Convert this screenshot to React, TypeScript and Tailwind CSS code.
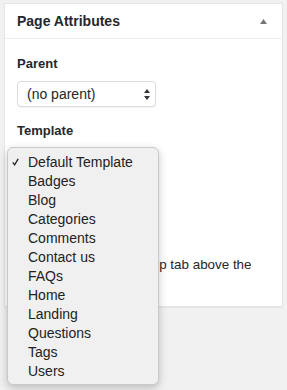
import React from "react";

const TEMPLATES = [
  "Default Template",
  "Badges",
  "Blog",
  "Categories",
  "Comments",
  "Contact us",
  "FAQs",
  "Home",
  "Landing",
  "Questions",
  "Tags",
  "Users",
];

function SelectArrows() {
  return (
    <svg width="6" height="11" viewBox="0 0 6 11" className="fill-[#32373c]">
      <path d="M3 0 L6 4 L0 4 Z" />
      <path d="M0 7 L6 7 L3 11 Z" />
    </svg>
  );
}

export default function App() {
  return (
    <div
      className="relative w-[287px] h-[390px] overflow-hidden bg-[#f1f1f1] pt-[3px] px-1 text-[#23282d]"
      style={{ fontFamily: '"Liberation Sans", Arial, sans-serif' }}
    >
      {/* Panel */}
      <div className="w-[279px] border border-[#e5e5e5] bg-white shadow-[0_1px_1px_rgba(0,0,0,0.04)]">
        <div className="flex h-[35px] items-center justify-between border-b border-[#eeeeee] px-3">
          <h2 className="text-[14px] font-bold leading-none">Page Attributes</h2>
          <svg width="7" height="5" viewBox="0 0 7 5" className="mr-[3px] fill-[#72777c]">
            <path d="M3.5 0 L7 5 L0 5 Z" />
          </svg>
        </div>

        <div className="px-3 pt-4 pb-[13px]">
          <p className="text-[13px] font-semibold leading-[18px]">Parent</p>
          <div className="mt-2 flex h-[26px] w-[139px] items-center justify-between rounded-[4px] border border-[#dcdcdc] bg-white pl-[9px] pr-[5px] shadow-[0_1px_1px_rgba(0,0,0,0.05)]">
            <span className="text-[14px] leading-none">(no parent)</span>
            <SelectArrows />
          </div>

          <p className="mt-[15px] text-[13px] font-semibold leading-[18px]">Template</p>
          <div className="mt-2 flex h-[26px] w-[139px] items-center justify-between rounded-[4px] border border-[#dcdcdc] bg-white pl-[9px] pr-[5px]">
            <span className="text-[14px] leading-none">Default Template</span>
            <SelectArrows />
          </div>

          <p className="mt-[15px] text-[13px] font-semibold leading-[18px]">Order</p>
          <div className="mt-2 h-[26px] w-[60px] rounded-[3px] border border-[#dddddd]" />

          <p className="mt-[14px] text-[13.4px] leading-[19px]">
            Need help? Use the Help tab above the screen title.
          </p>
        </div>
      </div>

      {/* Open template menu */}
      <div className="absolute left-[7px] top-[147px] w-[152px] rounded-[6px] border border-[#c9c9c9] bg-[#f0f0f0] py-1 shadow-[0_3px_8px_rgba(0,0,0,0.22)]">
        {TEMPLATES.map((name, i) => (
          <div key={name} className="relative flex h-[19px] items-center pl-[20px] text-[14px] leading-none text-[#222222]">
            {i === 0 && (
              <svg width="7" height="8" viewBox="0 0 7 8" className="absolute left-[4px] top-[6px] stroke-[#222222]" fill="none">
                <path d="M0.8 4.4 L2.6 6.8 L6.2 0.8" strokeWidth="1.3" />
              </svg>
            )}
            {name}
          </div>
        ))}
      </div>
    </div>
  );
}
